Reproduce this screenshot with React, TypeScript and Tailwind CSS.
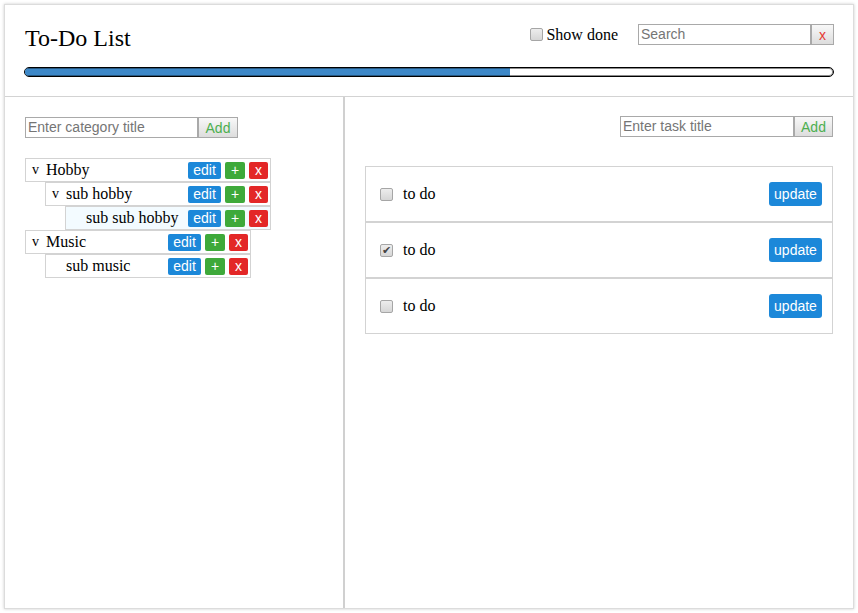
import { useState } from 'react';

type Categoria = { id: string; titulo: string; hijos: Categoria[] };

const CATEGORIAS: Categoria[] = [
  {
    id: 'hobby',
    titulo: 'Hobby',
    hijos: [
      {
        id: 'sub-hobby',
        titulo: 'sub hobby',
        hijos: [{ id: 'sub-sub-hobby', titulo: 'sub sub hobby', hijos: [] }],
      },
    ],
  },
  {
    id: 'music',
    titulo: 'Music',
    hijos: [{ id: 'sub-music', titulo: 'sub music', hijos: [] }],
  },
];

const TAREAS = [
  { id: 1, titulo: 'to do', hecha: false },
  { id: 2, titulo: 'to do', hecha: true },
  { id: 3, titulo: 'to do', hecha: false },
];

const sans = "font-['Liberation_Sans',Arial,sans-serif]";
const botonGris =
  'h-[21px] border border-[#a9a9a9] bg-gradient-to-b from-[#f8f8f8] to-[#dddddd] text-[14px] leading-none';
const campo = `h-[21px] border border-[#a9a9a9] px-[2px] text-[14px] outline-none placeholder:text-[#757575] ${sans}`;

// Casilla gris al estilo del checkbox clásico de Chrome.
function Casilla({ marcada, onCambio }: { marcada: boolean; onCambio: () => void }) {
  return (
    <span className="relative flex h-[13px] w-[13px] shrink-0">
      <input
        type="checkbox"
        checked={marcada}
        onChange={onCambio}
        className="m-0 h-[13px] w-[13px] appearance-none rounded-[2px] border border-[#a6a6a6] bg-gradient-to-b from-[#ededed] to-[#d6d6d6]"
      />
      {marcada ? (
        <span className="pointer-events-none absolute inset-0 flex items-center justify-center text-[11px] leading-none text-[#444]">
          ✔
        </span>
      ) : null}
    </span>
  );
}

function Nodo({ cat, activa }: { cat: Categoria; activa: string }) {
  const conHijos = cat.hijos.length > 0;
  return (
    <div className="flex flex-col">
      <div
        className={`flex h-[24px] min-w-[206px] items-center border border-[#d3d3d3] pl-[6px] pr-[2px] ${
          activa === cat.id ? 'bg-[#f3fbff]' : 'bg-white'
        }`}
      >
        <span className="w-[8px] text-[14px] leading-none">{conHijos ? 'v' : ''}</span>
        <span className="ml-[6px] mr-[9px] whitespace-nowrap text-[16px]">{cat.titulo}</span>
        <div className={`ml-auto flex gap-[4px] text-[14px] text-white ${sans}`}>
          <button className="flex h-[17px] w-[33px] items-center justify-center rounded-[2px] bg-[#1c88d9] leading-none">
            edit
          </button>
          <button className="flex h-[17px] w-[20px] items-center justify-center rounded-[2px] bg-[#3ea93a] leading-none">
            +
          </button>
          <button className="flex h-[17px] w-[19px] items-center justify-center rounded-[2px] bg-[#e32727] leading-none">
            x
          </button>
        </div>
      </div>
      {conHijos ? (
        <div className="ml-[20px] flex flex-col">
          {cat.hijos.map((h) => (
            <Nodo key={h.id} cat={h} activa={activa} />
          ))}
        </div>
      ) : null}
    </div>
  );
}

export default function App() {
  const [mostrarHechas, setMostrarHechas] = useState(false);
  const [busqueda, setBusqueda] = useState('');
  const [tareas, setTareas] = useState(TAREAS);

  return (
    <div className="h-screen bg-white p-1 font-['Liberation_Serif','Times_New_Roman',serif] text-black">
      <div className="flex h-full flex-col border border-[#dcdcdc] shadow-[0_0_3px_rgba(0,0,0,0.2)]">
        <div className="border-b border-[#d3d3d3] pb-[19px] pl-[20px] pr-[19px] pt-[19px]">
          <div className="flex h-[28px] items-start justify-between">
            <h1 className="text-[24px] leading-[28px]">To-Do List</h1>
            <div className="flex h-[21px] items-center">
              <label className="flex items-center gap-[3px] text-[16px]">
                <Casilla marcada={mostrarHechas} onCambio={() => setMostrarHechas((v) => !v)} />
                Show done
              </label>
              <input
                value={busqueda}
                onChange={(e) => setBusqueda(e.target.value)}
                placeholder="Search"
                className={`ml-[20px] w-[173px] ${campo}`}
              />
              <button
                onClick={() => setBusqueda('')}
                className={`${botonGris} w-[23px] text-[#e53935] ${sans}`}
              >
                x
              </button>
            </div>
          </div>
          <div className="-ml-px mt-[15px] h-[10px] overflow-hidden rounded-[5px] border border-black shadow-[inset_0_0_0_1px_rgba(0,0,0,0.45)]">
            <div className="h-full w-[60%] bg-[#3d88c8] shadow-[inset_0_1px_0_rgba(0,0,0,0.35),inset_0_-1px_0_rgba(0,0,0,0.35)]" />
          </div>
        </div>

        <div className="flex flex-1">
          <div className="w-[340px] border-r-2 border-[#d0d0d0] px-[20px] pt-[20px]">
            <div className="flex">
              <input placeholder="Enter category title" className={`w-[173px] ${campo}`} />
              <button className={`${botonGris} w-[40px] text-[#4caf50] ${sans}`}>Add</button>
            </div>
            <div className="mt-[20px] flex flex-col items-start">
              {CATEGORIAS.map((c) => (
                <Nodo key={c.id} cat={c} activa="sub-sub-hobby" />
              ))}
            </div>
          </div>

          <div className="flex-1 px-[20px] pt-[19px]">
            <div className="flex justify-end">
              <input placeholder="Enter task title" className={`w-[174px] ${campo}`} />
              <button className={`${botonGris} w-[39px] text-[#4caf50] ${sans}`}>Add</button>
            </div>
            <div className="mt-[29px] flex flex-col">
              {tareas.map((t) => (
                <div
                  key={t.id}
                  className="flex h-[56px] items-center border border-[#d3d3d3] pl-[14px] pr-[10px]"
                >
                  <Casilla
                    marcada={t.hecha}
                    onCambio={() =>
                      setTareas((prev) =>
                        prev.map((p) => (p.id === t.id ? { ...p, hecha: !p.hecha } : p)),
                      )
                    }
                  />
                  <span className="ml-[10px] text-[16px]">{t.titulo}</span>
                  <button
                    className={`ml-auto flex h-[24px] w-[53px] items-center justify-center rounded-[3px] bg-[#1c88d9] text-[14px] leading-none text-white ${sans}`}
                  >
                    update
                  </button>
                </div>
              ))}
            </div>
          </div>
        </div>
      </div>
    </div>
  );
}
